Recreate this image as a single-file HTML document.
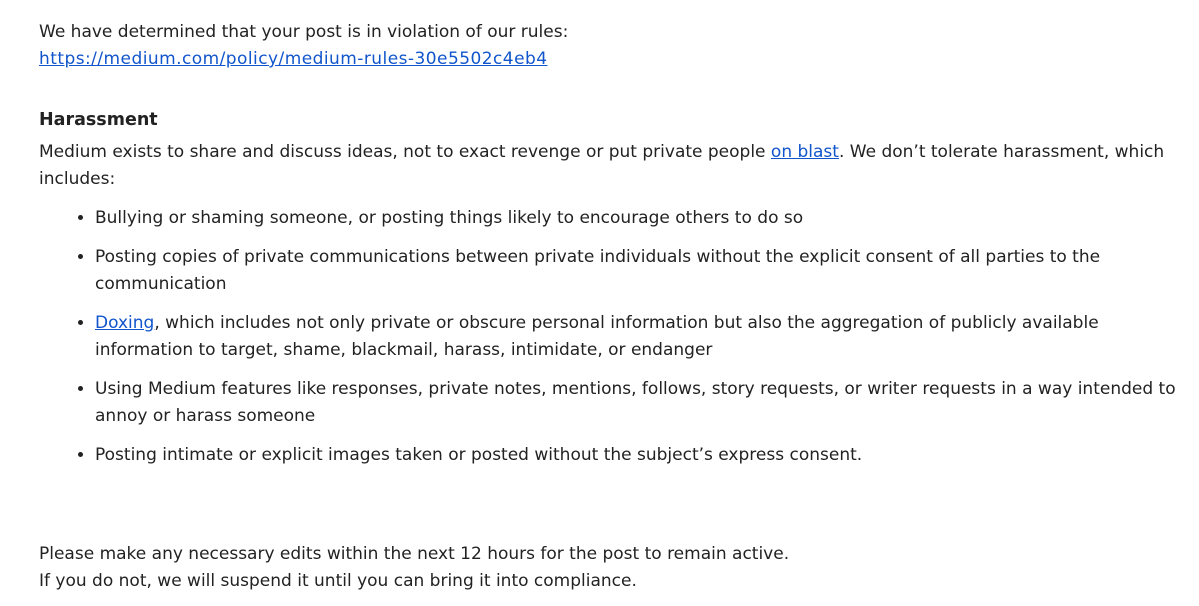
<!DOCTYPE html>
<html><head><meta charset="utf-8"><style>
body{margin:0;background:#fff;font-family:"DejaVu Sans","Liberation Sans",sans-serif;font-size:17px;color:#222;line-height:27px;}
.w{position:absolute;left:39px;top:19px;width:1140px;}
p{margin:0;}
a{color:#1155cc;text-decoration:underline;}
h3{margin:34px 0 0;font-size:17.5px;font-weight:bold;line-height:27px;}
ul{margin:12px 0 0;padding-left:56px;}
li{margin-bottom:12px;}
</style></head><body><div class="w">
<p>We have determined that your post is in violation of our rules:<br><a style="letter-spacing:0.45px">https://medium.com/policy/medium-rules-30e5502c4eb4</a></p>
<h3>Harassment</h3>
<p style="margin-top:5px">Medium exists to share and discuss ideas, not to exact revenge or put private people <a>on blast</a>. We don’t tolerate harassment, which includes:</p>
<ul>
<li>Bullying or shaming someone, or posting things likely to encourage others to do so</li>
<li>Posting copies of private communications between private individuals without the explicit consent of all parties to the communication</li>
<li><a>Doxing</a>, which includes not only private or obscure personal information but also the aggregation of publicly available information to target, shame, blackmail, harass, intimidate, or endanger</li>
<li>Using Medium features like responses, private notes, mentions, follows, story requests, or writer requests in a way intended to annoy or harass someone</li>
<li>Posting intimate or explicit images taken or posted without the subject’s express consent.</li>
</ul>
<p style="position:absolute;top:522px;">Please make any necessary edits within the next 12 hours for the post to remain active.<br>If you do not, we will suspend it until you can bring it into compliance.</p>
</div></body></html>
